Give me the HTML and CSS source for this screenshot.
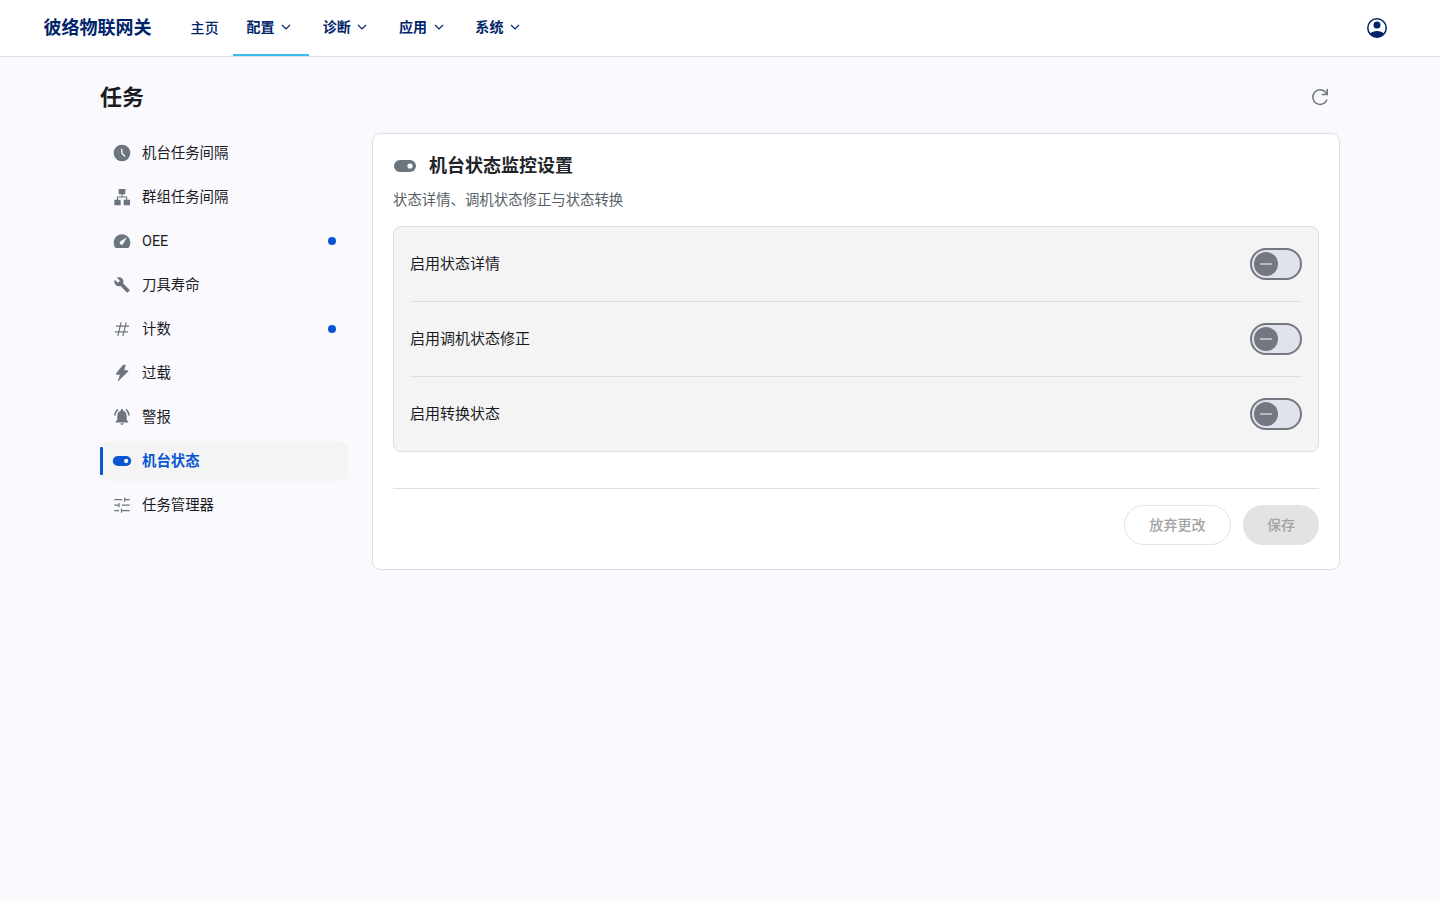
FILE: index.html
```html
<!DOCTYPE html>
<html lang="zh-CN">
<head>
    <meta charset="UTF-8">
    <meta name="viewport" content="width=device-width, initial-scale=1.0">
    <title>任务</title>
    <link rel="stylesheet" href="styles.css">
</head>
<body>
    <header class="topbar">
        <a class="brand">彼络物联网关</a>
        <nav class="nav">
            <a class="nav-item home">主页</a>
            <a class="nav-item active">配置<svg class="chev" viewBox="0 0 10 6"><path d="M1 1l4 4 4-4"/></svg></a>
            <a class="nav-item">诊断<svg class="chev" viewBox="0 0 10 6"><path d="M1 1l4 4 4-4"/></svg></a>
            <a class="nav-item">应用<svg class="chev" viewBox="0 0 10 6"><path d="M1 1l4 4 4-4"/></svg></a>
            <a class="nav-item">系统<svg class="chev" viewBox="0 0 10 6"><path d="M1 1l4 4 4-4"/></svg></a>
        </nav>
        <svg class="account" viewBox="0 0 24 24">
            <circle class="line" cx="12" cy="12" r="9.2"/>
            <circle cx="12" cy="9" r="3.5"/>
            <path d="M5 17.5c1.6-1.7 4.2-2.6 7-2.6s5.4.9 7 2.6c-1.6 2.5-4.2 4-7 4s-5.4-1.5-7-4z"/>
        </svg>
    </header>

    <main class="page">
        <div class="page-head">
            <h1>任务</h1>
            <svg class="refresh" viewBox="0 0 24 24"><path d="M19 14.5A7.3 7.3 0 1 1 17.9 7.6L19.2 9.3"/><path d="M19.2 4v5.500h-5.500"/></svg>
        </div>

        <div class="layout">
            <ul class="menu">
                <li>
                    <svg class="icon" viewBox="0 0 24 24"><circle cx="12" cy="12" r="10"/><path class="cut" d="M11.7 6.8V12l4 4.2"/></svg>
                    <span>机台任务间隔</span>
                </li>
                <li>
                    <svg class="icon" viewBox="0 0 24 24"><path d="M8 2.400h8v6.200H8zM2.800 15.200h7.600V22H2.800zM14 15.200h7.600V22H14z"/><path class="line" d="M12 8v4M6.500 15.500V12h11v3.500"/></svg>
                    <span>群组任务间隔</span>
                </li>
                <li>
                    <svg class="icon" viewBox="0 0 24 24"><path d="M4.400 20.400A10 10 0 1 1 19.600 20.400z"/><path class="hole" d="M17.900 7.400l-4.600 8.200a2.200 2.200 0 0 1-3.500-2.900z"/></svg>
                    <span>OEE</span>
                    <i class="dot"></i>
                </li>
                <li>
                    <svg class="icon" viewBox="0 0 24 24"><path transform="translate(2 1.800) scale(.84)" d="M22.700 19l-9.100-9.100c.9-2.300.4-5-1.500-6.900-2-2-5-2.400-7.400-1.300L9 6 6 9 1.600 4.700C.4 7.100.9 10.100 2.900 12.100c1.900 1.900 4.600 2.400 6.900 1.500l9.100 9.100c.4.4 1 .4 1.400 0l2.300-2.300c.5-.4.5-1.100.1-1.400z"/></svg>
                    <span>刀具寿命</span>
                </li>
                <li>
                    <svg class="icon" viewBox="0 0 24 24"><path class="line" d="M4.800 8.500h15.600M3.600 15.500h15.600M11 4L7 20.400M17 4l-4 16.400"/></svg>
                    <span>计数</span>
                    <i class="dot"></i>
                </li>
                <li>
                    <svg class="icon bolt" viewBox="0 0 24 24"><path d="M13.200 2.700L4.900 13.300l5.300.5-2.500 7.400L19.400 9.500l-5.400-.6 2-6.200z"/></svg>
                    <span>过载</span>
                </li>
                <li>
                    <svg class="icon" viewBox="0 0 24 24"><path transform="translate(.7 -.1) scale(.94 .98)" d="M7.580 4.080L6.150 2.650C3.750 4.480 2.170 7.300 2.030 10.500h2c.15-2.650 1.510-4.970 3.550-6.420zm12.390 6.420h2c-.15-3.200-1.730-6.020-4.120-7.850l-1.420 1.430c2.020 1.450 3.390 3.770 3.540 6.420zM18 11c0-3.070-1.640-5.640-4.500-6.320V4c0-.83-.67-1.500-1.500-1.500s-1.500.67-1.500 1.500v.68C7.630 5.360 6 7.920 6 11v5l-2 2v1h16v-1l-2-2v-5zm-6 11c.14 0 .27-.01.4-.04.65-.14 1.180-.58 1.440-1.180.1-.24.15-.5.15-.78h-4c.01 1.100.9 2 2.010 2z"/></svg>
                    <span>警报</span>
                </li>
                <li class="selected">
                    <svg class="icon" viewBox="0 0 24 24"><rect x="1" y="6" width="22" height="12" rx="6"/><circle class="hole" cx="17" cy="12" r="2.600"/></svg>
                    <span>机台状态</span>
                </li>
                <li>
                    <svg class="icon" viewBox="0 0 24 24"><path class="line" d="M2.800 5.500h9.400M15.200 5.500h6M15.200 3v5M2.800 12.200h5.600M8.400 9.700v5M11.500 12.200h9.700M2.800 18.700h5.600M11.400 18.700h9.800M11.400 16.200v5"/></svg>
                    <span>任务管理器</span>
                </li>
            </ul>

            <section class="card">
                <h2>
                    <svg viewBox="0 0 24 24"><rect x="1" y="6" width="22" height="12" rx="6"/><circle class="hole" cx="17" cy="12" r="2.600"/></svg>
                    <span>机台状态监控设置</span>
                </h2>
                <p class="desc">状态详情、调机状态修正与状态转换</p>
                <div class="options">
                    <div class="option"><span>启用状态详情</span><div class="switch"><div class="thumb"></div></div></div>
                    <div class="option"><span>启用调机状态修正</span><div class="switch"><div class="thumb"></div></div></div>
                    <div class="option"><span>启用转换状态</span><div class="switch"><div class="thumb"></div></div></div>
                </div>
                <div class="actions">
                    <button class="discard" disabled>放弃更改</button>
                    <button class="save" disabled>保存</button>
                </div>
            </section>
        </div>
    </main>
</body>
</html>
```
FILE: styles.css
```css
*{
    box-sizing: border-box;
}
body{
    margin: 0;
    background-color: #faf9fe;
    color: #1a1b1f;
    font-family: Roboto, "Noto Sans CJK SC", sans-serif;
    line-height: 1.5;
}
.topbar{
    display: flex;
    align-items: center;
    height: 57px;
    padding: 0 51.3px 0 43.5px;
    background-color: #fff;
    border-bottom: 1px solid #dedede;
    color: #002469;
}
.brand{
    font-size: 18px;
    font-weight: 600;
    width: 133.5px;
    padding-bottom: 2px;
}
.nav{
    display: flex;
    flex: 1;
    height: 56px;
}
.nav-item{
    display: flex;
    align-items: center;
    gap: 7px;
    width: 76.3px;
    padding: 0 13.4px 0 13.8px;
    font-size: 14px;
    font-weight: 600;
    letter-spacing: 0.1px;
    border-bottom: 2px solid transparent;
}
.nav-item.home{
    width: 55.6px;
    padding: 2px 13.6px 0;
    font-weight: 500;
}
.nav-item.active{
    border-bottom-color: #3cbaf3;
}
.chev{
    width: 10px;
    height: 6px;
    margin-left: -0.5px;
    fill: none;
    stroke: #002469;
    stroke-width: 1.2;
}
.account{
    width: 24px;
    height: 24px;
    fill: #002469;
}
.account .line{
    fill: none;
    stroke: #002469;
    stroke-width: 1.5;
}
.page{
    width: 1240px;
    margin: 0 auto;
}
.page-head{
    display: flex;
    align-items: center;
    justify-content: space-between;
    height: 76px;
    padding: 4px 8px 0 0;
}
h1{
    margin: 0;
    font-size: 22px;
    font-weight: 600;
}
.refresh{
    width: 24px;
    height: 24px;
    fill: none;
    stroke: #6c757d;
    stroke-width: 1.5;
}
.layout{
    display: grid;
    grid-template-columns: 248px 1fr;
    gap: 24px;
    align-items: start;
}
.menu{
    display: flex;
    flex-direction: column;
    gap: 4px;
    margin: 0;
    padding: 0;
    list-style: none;
}
.menu li{
    position: relative;
    display: flex;
    align-items: center;
    gap: 10px;
    height: 40px;
    padding: 0 12px;
    border-radius: 8px;
    font-size: 14.4px;
}
.menu span{
    padding-top: 2px;
}
.icon{
    width: 20px;
    height: 20px;
    fill: #6c757d;
}
.icon .line{
    fill: none;
    stroke: #6c757d;
    stroke-width: 1.4;
}
.icon .cut{
    fill: none;
    stroke: #faf9fe;
    stroke-width: 1.6;
}
.bolt{
    stroke: #6c757d;
    stroke-linejoin: round;
}
.hole{
    fill: #faf9fe;
}
.dot{
    width: 8px;
    height: 8px;
    margin-left: auto;
    border-radius: 50%;
    background-color: #0957d0;
}
.menu .selected{
    background-color: #f4f4f4;
    color: #0957d0;
    font-weight: 600;
}
.menu .selected .icon{
    fill: #0957d0;
}
/* bar at the left of the selected entry */
.selected::before{
    content: "";
    position: absolute;
    left: 0;
    top: 6px;
    width: 3px;
    height: 28px;
    background-color: #0957d0;
    border-radius: 1px;
}
.card{
    height: 437px;
    padding: 20px;
    background-color: #fff;
    border: 1px solid #dedede;
    border-radius: 8px;
}
h2{
    display: flex;
    align-items: center;
    gap: 12px;
    height: 24px;
    margin: 0;
    font-size: 18px;
    font-weight: 600;
    color: #212529;
}
h2 span{
    padding-bottom: 2px;
}
h2 svg{
    width: 24px;
    height: 24px;
    fill: #6c757d;
}
.desc{
    margin: 12px 0 14px;
    height: 22px;
    line-height: 22px;
    font-size: 14.4px;
    color: #565e66;
}
.options{
    padding: 0 16px;
    background-color: #f4f4f4;
    border: 1px solid #dedede;
    border-radius: 8px;
}
.option{
    display: flex;
    align-items: center;
    justify-content: space-between;
    height: 75px;
    border-bottom: 1px solid #dedede;
    font-size: 15px;
}
.option:last-child{
    height: 74px;
    border-bottom: none;
}
.switch{
    display: flex;
    align-items: center;
    width: 52px;
    height: 32px;
    padding: 0 2px;
    border: 2px solid #74777f;
    border-radius: 16px;
    background-color: #e0e2ec;
}
.thumb{
    display: flex;
    align-items: center;
    justify-content: center;
    width: 24px;
    height: 24px;
    border-radius: 50%;
    background-color: #74777f;
}
.thumb::after{
    content: "";
    width: 12px;
    height: 2px;
    background-color: #b7bac3;
}
.actions{
    display: flex;
    justify-content: flex-end;
    gap: 12px;
    margin-top: 36px;
    padding-top: 16px;
    border-top: 1px solid #dedede;
}
.actions button{
    height: 40px;
    padding: 0;
    border-radius: 20px;
    font-family: inherit;
    font-size: 14px;
    font-weight: 500;
    line-height: 20px;
    letter-spacing: 0.1px;
    color: #a2a3a2;
}
.discard{
    width: 107px;
    background-color: #fff;
    border: 1px solid #e3e3e3;
}
.save{
    width: 76px;
    background-color: #e3e3e3;
    border: none;
}
```
